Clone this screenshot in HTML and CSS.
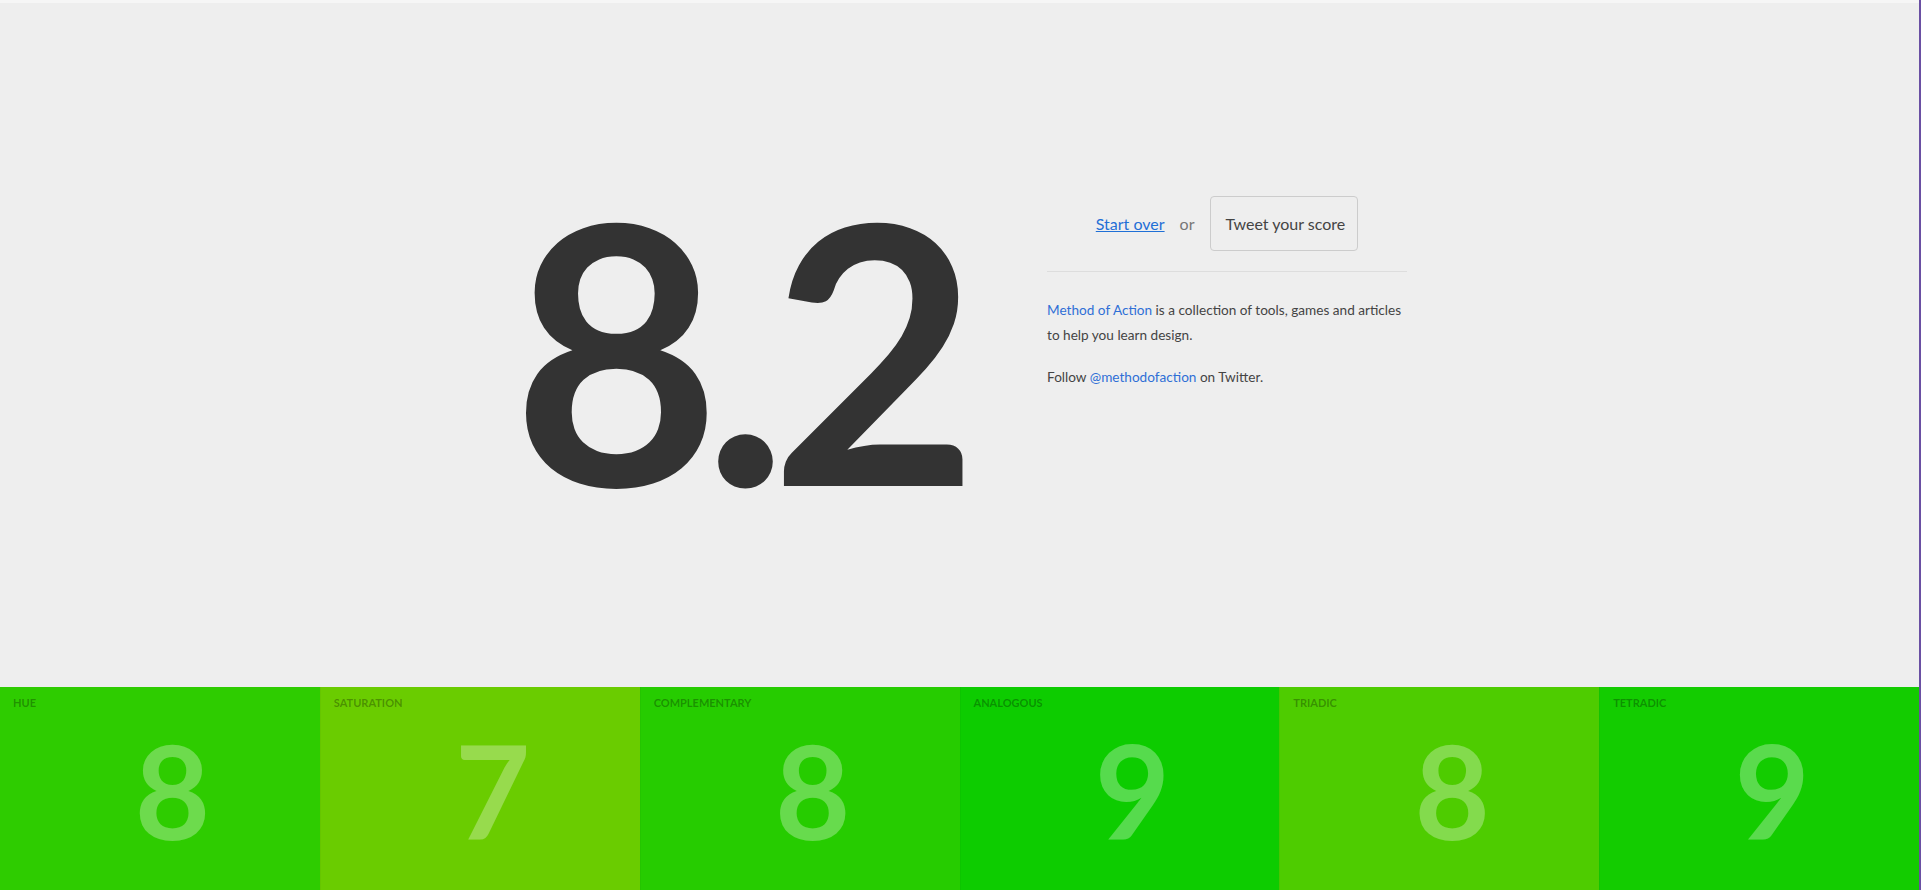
FILE: index.html
```html
<!DOCTYPE html>
<html lang="en">
<head>
<meta charset="utf-8">
<title>Color — Score</title>
<link rel="stylesheet" href="styles.css">
</head>
<body>
<div class="page">
  <section class="hero">
    <div class="score">8.2</div>
    <div class="info">
      <div class="actions">
        <a class="start" href="#">Start over</a>
        <span class="or">or</span>
        <button class="tweet" type="button">Tweet your score</button>
      </div>
      <p class="blurb"><a href="#">Method of Action</a> is a collection of tools, games and articles to help you learn design.</p>
      <p class="blurb">Follow <a href="#">@methodofaction</a> on Twitter.</p>
    </div>
  </section>
  <section class="tiles">
    <div class="tile t-hue"><div class="label">HUE</div><div class="digit">8</div></div>
    <div class="tile t-sat"><div class="label">SATURATION</div><div class="digit">7</div></div>
    <div class="tile t-comp"><div class="label">COMPLEMENTARY</div><div class="digit">8</div></div>
    <div class="tile t-ana"><div class="label">ANALOGOUS</div><div class="digit">9</div></div>
    <div class="tile t-tri"><div class="label">TRIADIC</div><div class="digit">8</div></div>
    <div class="tile t-tet"><div class="label">TETRADIC</div><div class="digit">9</div></div>
  </section>
</div>
</body>
</html>
```

FILE: styles.css
```css
html, body {
  margin: 0;
  padding: 0;
  height: 100%;
  overflow: hidden;
}
body {
  background: #eeeeee;
  font-family: Lato, "Open Sans", "Liberation Sans", sans-serif;
  color: #444;
  border-right: 2px solid #6a4fa3;
}
.page {
  display: flex;
  flex-direction: column;
}
.hero {
  border-top: 3px solid #f6f6f6;
  background: #eeeeee;
  display: flex;
  justify-content: center;
  align-items: flex-start;
  padding-top: 164px;
  box-sizing: content-box;
  gap: 86px;
  height: 520px;
}
.score {
  font-size: 360px;
  font-weight: 700;
  line-height: 1;
  color: #333333;
  letter-spacing: -0.05em;
}
.info {
  width: 360px;
  margin-top: 29px;
}
.actions {
  display: flex;
  align-items: center;
  justify-content: center;
  gap: 15px;
  padding-bottom: 20px;
  border-bottom: 1px solid #dddddd;
}
.start {
  font-size: 16px;
  color: #1f6fd6;
  text-decoration: underline;
}
.or {
  font-size: 16px;
  color: #777;
}
.tweet {
  font-family: inherit;
  font-size: 16px;
  color: #444;
  background: #eeeeee;
  border: 1px solid #cccccc;
  border-radius: 4px;
  height: 55px;
  padding: 0 12px 0 15px;
}
.blurb {
  font-size: 13.6px;
  line-height: 25px;
  margin: 26px 0 0;
  color: #444;
}
.blurb + .blurb {
  margin-top: 17px;
}
.blurb a {
  color: #2f6fd6;
  text-decoration: none;
}
.tiles {
  display: grid;
  grid-template-columns: repeat(6, 1fr);
  height: 203px;
}
.tile {
  padding: 9px 0 0 13px;
  box-sizing: border-box;
  border-left: 1px solid rgba(0, 0, 0, 0.03);
}
.tile:first-child {
  border-left: none;
}
.label {
  font-size: 11px;
  font-weight: 700;
  color: rgba(0, 0, 0, 0.3);
  line-height: 14px;
}
.digit {
  font-size: 130px;
  font-weight: 700;
  line-height: 1;
  text-align: center;
  padding-left: 12px;
  margin-top: 15px;
  color: rgba(255, 255, 255, 0.3);
}
.t-hue { background: #2ecc00; }
.t-sat { background: #6acc00; }
.t-comp { background: #26cc00; }
.t-ana { background: #0dcc00; }
.t-tri { background: #4ecc00; }
.t-tet { background: #13cc00; }
```
